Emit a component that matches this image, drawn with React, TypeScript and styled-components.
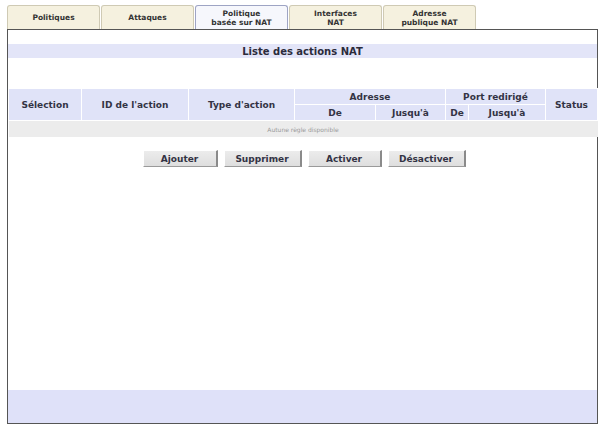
import React from "react";
import styled, { createGlobalStyle } from "styled-components";

const Global = createGlobalStyle`
  html, body { margin: 0; padding: 0; background: #ffffff; }
  body { font-family: "DejaVu Sans", Verdana, sans-serif; color: #333; }
`;

const Page = styled.div`
  padding: 5px 4px 0 7px;
  width: 601px;
  height: 426px;
  box-sizing: border-box;
  display: flex;
  flex-direction: column;
`;

const TabBar = styled.div`
  display: flex;
  height: 24px;
`;

const Tab = styled.div<{ $active?: boolean }>`
  width: 93px;
  box-sizing: border-box;
  margin-right: 1px;
  border: 1px solid ${(p) => (p.$active ? "#9ea4c4" : "#cfcab4")};
  border-bottom: none;
  border-radius: 3px 3px 0 0;
  background: ${(p) => (p.$active ? "#f6f7fc" : "#f5f1df")};
  display: flex;
  align-items: center;
  justify-content: center;
  text-align: center;
  font-size: 7.5px;
  font-weight: bold;
  line-height: 9px;
  color: #333;
`;

const Panel = styled.div`
  width: 591px;
  height: 395px;
  box-sizing: border-box;
  border: 1px solid #555;
  display: flex;
  flex-direction: column;
`;

const TitleBand = styled.div`
  margin-top: 14px;
  height: 14px;
  background: #e3e5f8;
  display: flex;
  align-items: center;
  justify-content: center;
  font-size: 10px;
  font-weight: bold;
  color: #2b2b3b;
`;

const Table = styled.table`
  margin-top: 30px;
  width: 589px;
  border-collapse: collapse;
  table-layout: fixed;
`;

const Th = styled.th`
  background: #e0e3f8;
  border: 1px solid #ffffff;
  font-size: 9px;
  font-weight: bold;
  color: #333344;
  padding: 0;
  height: 15px;
  text-align: center;
`;

const EmptyCell = styled.td`
  background: #ececec;
  height: 16px;
  text-align: center;
  font-size: 6px;
  color: #9a9a9a;
  padding: 0;
`;

const ButtonRow = styled.div`
  margin-top: 13px;
  display: flex;
  justify-content: center;
  gap: 6px;
  padding-left: 3px;
`;

const Button = styled.button<{ $w: number }>`
  width: ${(p) => p.$w}px;
  height: 17px;
  box-sizing: border-box;
  background: linear-gradient(#ececec, #dedede);
  border: 1px solid #ffffff;
  border-right: 2px solid #8a8a8a;
  border-bottom: 1px solid #9a9a9a;
  font-family: "DejaVu Sans", Verdana, sans-serif;
  font-size: 9px;
  font-weight: bold;
  color: #333344;
  padding: 0;
`;

const Spacer = styled.div`
  flex: 1;
`;

const BottomBand = styled.div`
  height: 33px;
  background: #dfe1f9;
`;

export default function App() {
  const tabs = [
    { label: "Politiques" },
    { label: "Attaques" },
    { label: "Politique\nbasée sur NAT", active: true },
    { label: "Interfaces\nNAT" },
    { label: "Adresse\npublique NAT" },
  ];
  return (
    <>
      <Global />
      <Page>
        <TabBar>
          {tabs.map((t) => (
            <Tab key={t.label} $active={t.active}>
              <span>
                {t.label.split("\n").map((l, i) => (
                  <React.Fragment key={i}>
                    {i > 0 && <br />}
                    {l}
                  </React.Fragment>
                ))}
              </span>
            </Tab>
          ))}
        </TabBar>
        <Panel>
          <TitleBand>Liste des actions NAT</TitleBand>
          <Table>
            <colgroup>
              <col style={{ width: 73 }} />
              <col style={{ width: 107 }} />
              <col style={{ width: 106 }} />
              <col style={{ width: 81 }} />
              <col style={{ width: 70 }} />
              <col style={{ width: 23 }} />
              <col style={{ width: 77 }} />
              <col style={{ width: 52 }} />
            </colgroup>
            <thead>
              <tr>
                <Th rowSpan={2}>Sélection</Th>
                <Th rowSpan={2}>ID de l'action</Th>
                <Th rowSpan={2}>Type d'action</Th>
                <Th colSpan={2}>Adresse</Th>
                <Th colSpan={2}>Port redirigé</Th>
                <Th rowSpan={2}>Status</Th>
              </tr>
              <tr>
                <Th>De</Th>
                <Th>Jusqu'à</Th>
                <Th>De</Th>
                <Th>Jusqu'à</Th>
              </tr>
            </thead>
            <tbody>
              <tr>
                <EmptyCell colSpan={8}>Autune règle disponible</EmptyCell>
              </tr>
            </tbody>
          </Table>
          <ButtonRow>
            <Button $w={75}>Ajouter</Button>
            <Button $w={78}>Supprimer</Button>
            <Button $w={74}>Activer</Button>
            <Button $w={78}>Désactiver</Button>
          </ButtonRow>
          <Spacer />
          <BottomBand />
        </Panel>
      </Page>
    </>
  );
}
